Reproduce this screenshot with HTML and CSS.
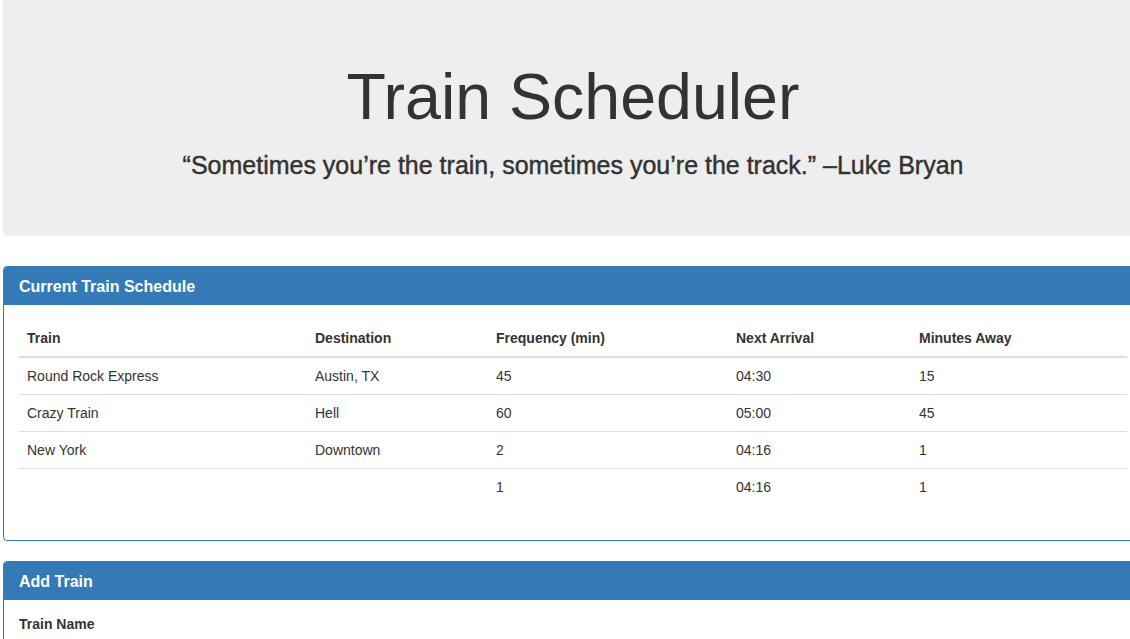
FILE: index.html
```html
<!DOCTYPE html>
<html>
<head>
<meta charset="utf-8">
<title>Train Scheduler</title>
<link rel="stylesheet" href="styles.css">
</head>
<body>
<div class="container">
  <div class="jumbotron">
    <h1 class="title">Train Scheduler</h1>
    <h3 class="quote">“Sometimes you’re the train, sometimes you’re the track.” –Luke Bryan</h3>
  </div>

  <div class="panel">
    <div class="panel-heading"><h3 class="panel-title">Current Train Schedule</h3></div>
    <div class="panel-body">
      <table class="table">
        <thead>
          <tr>
            <th class="c1">Train</th>
            <th class="c2">Destination</th>
            <th class="c3">Frequency (min)</th>
            <th class="c4">Next Arrival</th>
            <th class="c5">Minutes Away</th>
          </tr>
        </thead>
        <tbody>
          <tr><td>Round Rock Express</td><td>Austin, TX</td><td>45</td><td>04:30</td><td>15</td></tr>
          <tr><td>Crazy Train</td><td>Hell</td><td>60</td><td>05:00</td><td>45</td></tr>
          <tr><td>New York</td><td>Downtown</td><td>2</td><td>04:16</td><td>1</td></tr>
          <tr><td></td><td></td><td>1</td><td>04:16</td><td>1</td></tr>
        </tbody>
      </table>
    </div>
  </div>

  <div class="panel">
    <div class="panel-heading"><h3 class="panel-title">Add Train</h3></div>
    <div class="panel-body">
      <div class="form-group">
        <label class="label">Train Name</label>
      </div>
    </div>
  </div>
</div>
</body>
</html>
```

FILE: styles.css
```css
html, body {
  margin: 0;
  padding: 0;
  overflow: hidden;
  background: #fff;
}
body {
  font-family: "Liberation Sans", Arial, sans-serif;
  font-size: 14px;
  line-height: 1.42857;
  color: #333;
}
.container {
  width: 1140px;
  margin-left: 3px;
}
.jumbotron {
  background: #eee;
  border-radius: 0 0 6px 6px;
  padding: 42px 60px 47px;
  margin-bottom: 30px;
  text-align: center;
}
.title {
  font-size: 64.5px;
  font-weight: 500;
  line-height: 1.1;
  margin: 20px 0 10px;
  color: #333;
}
.quote {
  font-size: 25px;
  font-weight: 500;
  line-height: 1.1;
  margin: 19px 0 10px;
  color: #333;
  -webkit-text-stroke: 0.45px #333;
}
.panel {
  border: 1px solid #337ab7;
  border-radius: 4px;
  margin-bottom: 20px;
  background: #fff;
}
.panel-heading {
  background: #337ab7;
  color: #fff;
  padding: 11px 15px 9px;
  border-bottom: 1px solid #337ab7;
  border-radius: 3px 3px 0 0;
}
.panel-title {
  margin: 0;
  font-size: 16px;
  font-weight: bold;
  line-height: 17px;
}
.panel-body {
  padding: 15px;
}
.table {
  width: 100%;
  border-collapse: collapse;
  border-spacing: 0;
  margin-bottom: 20px;
}
.table th, .table td {
  text-align: left;
  padding: 9px 8px 7px;
  line-height: 1.42857;
  vertical-align: top;
}
.table th {
  border-bottom: 2px solid #ddd;
  font-weight: bold;
}
.table td {
  border-top: 1px solid #ddd;
  height: 20px;
}
.table tbody tr:first-child td {
  border-top: 0;
}
.c1 { width: 272px; }
.c2 { width: 165px; }
.c3 { width: 224px; }
.c4 { width: 167px; }
.form-group {
  margin-bottom: 15px;
}
.label {
  display: inline-block;
  font-weight: bold;
  margin-bottom: 5px;
}
```
